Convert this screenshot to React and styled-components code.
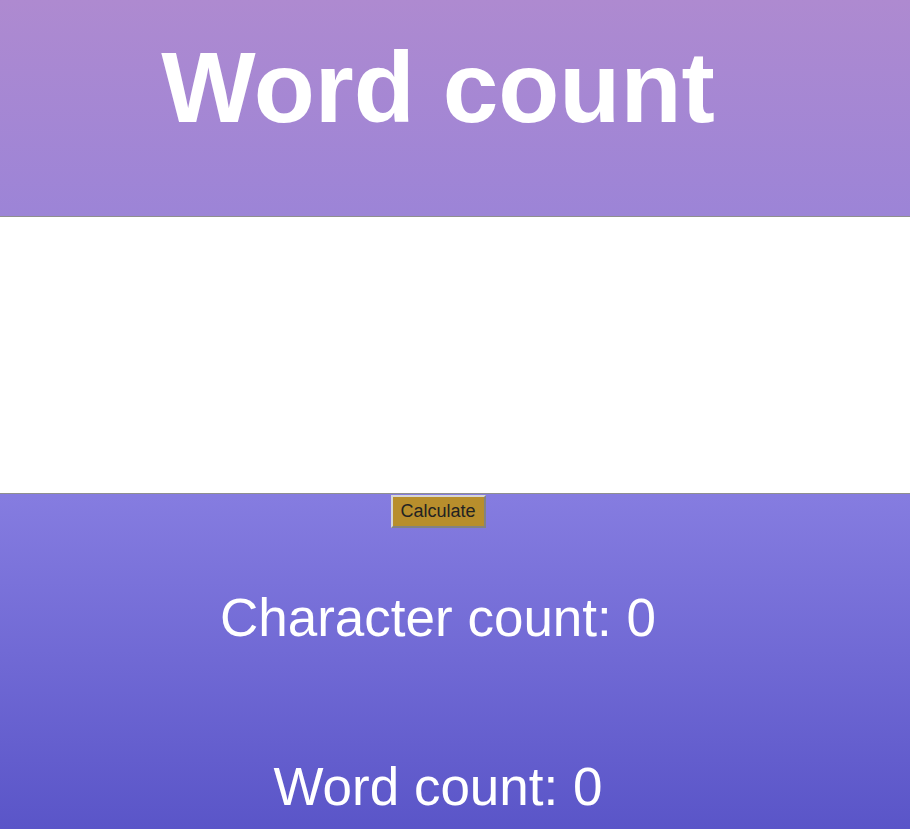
import React, { useState } from "react";
import styled, { createGlobalStyle } from "styled-components";

const GlobalStyle = createGlobalStyle`
  body {
    margin: 0;
    font-family: "Comic Sans MS", "Liberation Sans", sans-serif;
  }
`;

const Page = styled.div`
  min-height: 100vh;
  display: flex;
  flex-direction: column;
  align-items: center;
  background: linear-gradient(to bottom, #ae8ad0 0%, #857ce0 60%, #5a55c8 100%);
`;

const Header = styled.header`
  box-sizing: border-box;
  height: 216px;
  width: 100%;
  padding: 37px 34px 0 0;
  text-align: center;
`;

const Title = styled.h1`
  margin: 0;
  font-size: 100px;
  line-height: 100px;
  font-weight: 700;
  color: #fff;
`;

const TextBox = styled.textarea`
  box-sizing: border-box;
  display: block;
  width: 100%;
  height: 278px;
  margin: 0;
  border: none;
  border-top: 1px solid #8f8f8f;
  border-bottom: 1px solid #8f8f8f;
  background: #fff;
  resize: none;
  outline: none;
  font-family: inherit;
  font-size: 18px;
`;

const Button = styled.button`
  box-sizing: border-box;
  margin: 1px 34px 0 0;
  width: 95px;
  height: 33px;
  padding: 0;
  background: #b88e2c;
  color: #222;
  border: 2px outset #d6d6d6;
  font-family: inherit;
  font-size: 18px;
  cursor: pointer;
`;

const Result = styled.p`
  margin: ${({ $top }) => $top}px 34px 0 0;
  font-size: 53px;
  line-height: 53px;
  color: #fff;
  text-align: center;
`;

export default function App() {
  const [text, setText] = useState("");
  const [counts, setCounts] = useState({ chars: 0, words: 0 });

  const calculate = () => {
    const words = text.trim() ? text.trim().split(/\s+/).length : 0;
    setCounts({ chars: text.length, words });
  };

  return (
    <>
      <GlobalStyle />
      <Page>
        <Header>
          <Title>Word count</Title>
        </Header>
        <TextBox value={text} onChange={(e) => setText(e.target.value)} />
        <Button onClick={calculate}>Calculate</Button>
        <Result $top={63}>Character count: {counts.chars}</Result>
        <Result $top={116}>Word count: {counts.words}</Result>
      </Page>
    </>
  );
}
